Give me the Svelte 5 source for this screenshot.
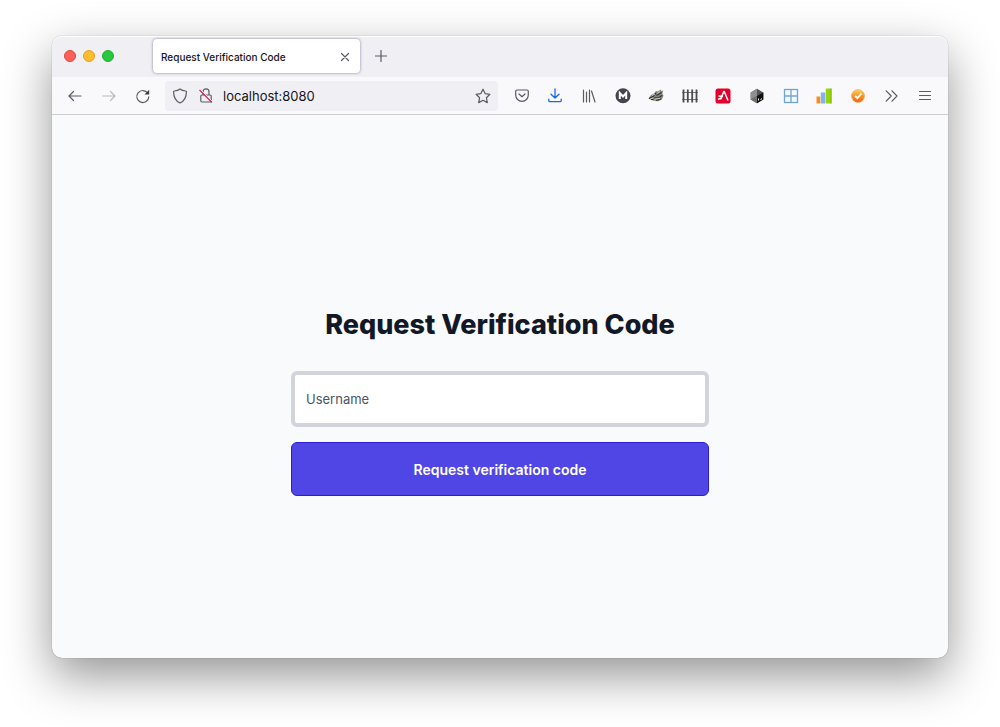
<script lang="ts">
  const title = 'Request Verification Code';

  let address = $state('localhost:8080');
  let username = $state('');

  function onSubmit(e: SubmitEvent) {
    e.preventDefault();
  }
</script>

<div class="desktop">
  <div class="window">
    <header class="tab-bar">
      <div class="lights">
        <button type="button" class="light red" aria-label="Close window"></button>
        <button type="button" class="light yellow" aria-label="Minimize window"></button>
        <button type="button" class="light green" aria-label="Zoom window"></button>
      </div>
      <div class="tab">
        <span class="tab-title">{title}</span>
        <button type="button" class="tab-close" aria-label="Close tab">
          <svg width="10" height="10" viewBox="0 0 10 10"><path class="line" d="M1.5 1.5l7 7M8.5 1.5l-7 7" /></svg>
        </button>
      </div>
      <button type="button" class="new-tab" aria-label="New tab">
        <svg width="12" height="12" viewBox="0 0 12 12"><path class="line" d="M6 .5v11M.5 6h11" /></svg>
      </button>
    </header>

    <nav class="toolbar" aria-label="Navigation">
      <div class="history">
        <button type="button" aria-label="Back">
          <svg width="16" height="16" viewBox="0 0 16 16"><path class="line" d="M14 8H2M6.500 3.500L2 8l4.500 4.500" /></svg>
        </button>
        <button type="button" aria-label="Forward" disabled>
          <svg width="16" height="16" viewBox="0 0 16 16"><path class="line" d="M2 8h12M9.500 3.500L14 8l-4.500 4.500" /></svg>
        </button>
        <button type="button" aria-label="Reload">
          <svg width="16" height="16" viewBox="0 0 16 16">
            <path class="line" d="M12.800 5.200A6 6 0 1 0 13.800 8.800" />
            <path fill="#3b3a45" d="M14.200 1.800v4.700H9.500z" />
          </svg>
        </button>
      </div>

      <div class="address">
        <button type="button" aria-label="Tracking protection">
          <svg width="16" height="16" viewBox="0 0 16 16"><path class="line" d="M8 1C6.500 2.300 4.300 2.900 2.300 3c-.4 0-.7.3-.7.700C1.600 9 3.500 13 8 15c4.500-2 6.400-6 6.400-11.300 0-.4-.3-.7-.7-.7C11.700 2.900 9.500 2.300 8 1z" /></svg>
        </button>
        <button type="button" aria-label="Connection is not secure">
          <svg width="16" height="16" viewBox="0 0 16 16">
            <path class="line" d="M5 7V3.800a3 3 0 0 1 6 0V7M4 7h8a1.200 1.200 0 0 1 1.200 1.200v4.600A1.200 1.200 0 0 1 12 14H4a1.200 1.200 0 0 1-1.200-1.200V8.200A1.200 1.200 0 0 1 4 7z" />
            <path stroke="#f9f9fb" stroke-width="1" d="M2.500 1.500l12.500 12.500" />
            <path stroke="#e22850" stroke-width="1.300" d="M1.500 2L14 14.500" />
          </svg>
        </button>
        <input type="text" aria-label="Address" bind:value={address} />
        <button type="button" aria-label="Bookmark this page">
          <svg width="16" height="16" viewBox="0 0 16 16"><path class="line" d="M8 1.200l2.100 4.400 4.800.7-3.500 3.400.9 4.900L8 12.300l-4.300 2.300.9-4.900L1.100 6.300l4.800-.7z" /></svg>
        </button>
      </div>

      <div class="extensions">
        <button type="button" aria-label="Pocket">
          <svg width="16" height="16" viewBox="0 0 16 16">
            <path class="line" d="M3 2h10a1.300 1.300 0 0 1 1.300 1.300V7a6.300 6.300 0 0 1-12.600 0V3.300A1.300 1.300 0 0 1 3 2z" />
            <path class="line" d="M5 6l3 2.700L11 6" />
          </svg>
        </button>
        <button type="button" aria-label="Downloads">
          <svg width="16" height="16" viewBox="0 0 16 16"><path fill="none" stroke="#1967e8" stroke-width="1.300" stroke-linecap="round" stroke-linejoin="round" d="M8 .8v9M4 6.200L8 10l4-3.800M1.800 11.200v1.300a1.200 1.200 0 0 0 1.200 1.200h10a1.200 1.200 0 0 0 1.200-1.200v-1.300" /></svg>
        </button>
        <button type="button" aria-label="Library">
          <svg width="16" height="16" viewBox="0 0 16 16"><path class="line" d="M2.500 2v12M5.500 4v10M8.500 2v12M10.500 3l3.500 11" /></svg>
        </button>
        <button type="button" aria-label="Multi-account">
          <svg width="16" height="16" viewBox="0 0 16 16">
            <circle cx="8" cy="7.700" r="7.500" fill="#45434f" />
            <path fill="none" stroke="#fff" stroke-width="2" d="M4.800 11V5L8 8.500 11.200 5v6" />
          </svg>
        </button>
        <button type="button" aria-label="Privacy Badger">
          <svg width="16" height="16" viewBox="0 0 16 16">
            <path fill="#85867f" d="M.5 10.500L3 7l3-1.500 2-2.500 2 .5 2.500-2 .8 1.500 2-.5-1 3 1.200 2-1.500 4-4 1.800-5.500-.8z" />
            <path fill="none" stroke="#2f302e" stroke-width="1.100" d="M1 10.500L5 8.500l3-3.500M8.500 7.500l5-3M6 10l5-.5 3-2M8 12.500l5-1.500M3 11.500h2.500" />
            <path fill="none" stroke="#d6d6d0" stroke-width=".9" d="M4 7.500L7 6M6.500 11.200l5.500-1M2.500 10.500L5 10M9.500 5.500l2.500-2" />
          </svg>
        </button>
        <button type="button" aria-label="Fence">
          <svg width="18" height="16" viewBox="0 0 18 16">
            <path fill="none" stroke="#77777b" stroke-width="1" d="M1 4.500h16M1 11.500h16" />
            <path fill="none" stroke="#4b4b50" stroke-width="1.800" d="M2.500 1.500v13M6.800 1.500v13M11.200 1.500v13M15.500 1.500v13" />
          </svg>
        </button>
        <button type="button" aria-label="Accessibility checker">
          <svg width="16" height="16" viewBox="0 0 16 16">
            <rect x=".5" y=".5" width="15" height="15" rx="2.500" fill="#e4002b" />
            <path fill="none" stroke="#fff" stroke-width="1.500" d="M9 3l4 9.500M9 3L5.500 11.500M3.500 8l4.500.5M3 11.500l4-2" />
          </svg>
        </button>
        <button type="button" aria-label="Terminal cube">
          <svg width="16" height="16" viewBox="0 0 16 16">
            <path fill="#555" d="M8 .8l6.300 3.600v7.200L8 15.200l-6.300-3.600V4.400z" />
            <path fill="#8f8f8f" d="M8 .8L1.700 4.400v7.200L8 8z" />
            <path fill="#707070" d="M1.700 11.600L8 15.200V8z" />
            <path fill="#111" d="M14.300 4.400v7.200L8 15.200V8z" />
            <path stroke="#fff" d="M9.500 10.500v2M11.500 11.500l1.500-.8" />
          </svg>
        </button>
        <button type="button" aria-label="Window layout">
          <svg width="16" height="16" viewBox="0 0 16 16">
            <rect x="1.500" y="1.500" width="13" height="13" fill="#f3faff" stroke="#73a4cd" stroke-width="1.300" />
            <path stroke="#73a4cd" stroke-width="1.300" d="M8 1.500v13M1.500 8h13" />
          </svg>
        </button>
        <button type="button" aria-label="Statistics">
          <svg width="16" height="16" viewBox="0 0 16 16">
            <path fill="#f98e16" d="M.5 8.500h3.800v7H.5z" />
            <path fill="#80b2f5" d="M4.800 4.500h4.500v11H4.800z" />
            <path fill="#98d40d" d="M9.800.5h5.700v15H9.800z" />
            <path fill="#7bb60a" d="M14.500.5h1v15h-1z" />
          </svg>
        </button>
        <button type="button" aria-label="Tasks">
          <svg width="16" height="16" viewBox="0 0 16 16">
            <defs>
              <linearGradient id="orange" x1="0" y1="0" x2="0" y2="1">
                <stop offset="0" stop-color="#fbd36e" />
                <stop offset=".45" stop-color="#fb9b20" />
                <stop offset="1" stop-color="#f65b0c" />
              </linearGradient>
            </defs>
            <circle cx="8" cy="8" r="6.500" fill="url(#orange)" stroke="#e9a968" stroke-width=".6" />
            <path fill="none" stroke="#fff" stroke-width="1.800" d="M5 8l2.300 2.200L11.500 5.500" />
          </svg>
        </button>
        <button type="button" aria-label="More tools">
          <svg width="16" height="16" viewBox="0 0 16 16"><path class="line" d="M2.200 2.800L7.200 8l-5 5.200M8 2.800L13 8l-5 5.200" /></svg>
        </button>
        <button type="button" aria-label="Menu">
          <svg width="16" height="16" viewBox="0 0 16 16"><path class="line" d="M2.500 3.500h11M2.500 7.500h11M2.500 11.500h11" /></svg>
        </button>
      </div>
    </nav>

    <main class="page">
      <form onsubmit={onSubmit}>
        <h1>{title}</h1>
        <input type="text" placeholder="Username" aria-label="Username" bind:value={username} />
        <button type="submit">Request verification code</button>
      </form>
    </main>
  </div>
</div>

<style>
  :global(body) {
    background: #fff;
    font-family: Inter, 'Liberation Sans', sans-serif;
  }

  .desktop {
    display: flex;
    box-sizing: border-box;
    min-height: 100vh;
    padding: 36px 52px 69px;
    overflow: hidden;
  }

  .window {
    display: flex;
    flex: 1;
    flex-direction: column;
    border-radius: 10px;
    background: #f9fafb;
    box-shadow:
      0 0 1px rgba(0, 0, 0, 0.5),
      0 18px 48px rgba(0, 0, 0, 0.42);
  }

  button {
    display: flex;
    align-items: center;
    justify-content: center;
    padding: 0;
    border: 0;
    background: none;
    font: inherit;
  }

  input {
    box-sizing: border-box;
    min-width: 0;
    font: inherit;
  }

  .line {
    fill: none;
    stroke: #5b5a64;
    stroke-width: 1.2;
    stroke-linecap: round;
    stroke-linejoin: round;
  }

  .tab-bar {
    display: flex;
    align-items: center;
    height: 41px;
    padding: 0 12px 1px;
    box-sizing: border-box;
    border-radius: 10px 10px 0 0;
    background: #f0eff4;
    box-shadow: inset 0 1px #fff;
  }

  .lights {
    display: flex;
    gap: 7px;
    margin-right: 39px;
  }

  .light {
    width: 12px;
    height: 12px;
    border-radius: 50%;
  }

  .red {
    border: 1px solid #e2463f;
    background: #ff5f57;
  }

  .yellow {
    border: 1px solid #e1a325;
    background: #febc2e;
  }

  .green {
    border: 1px solid #24ab35;
    background: #28c840;
  }

  .tab {
    display: flex;
    align-items: center;
    justify-content: space-between;
    box-sizing: border-box;
    width: 207px;
    height: 34px;
    padding: 1px 10px 0 8px;
    border-radius: 4px;
    background: #fff;
    box-shadow: 0 0 3px rgba(60, 55, 100, 0.6);
    color: #15141a;
    font-size: 10px;
    font-weight: 500;
  }

  .new-tab {
    width: 28px;
    height: 28px;
    margin-left: 7px;
  }

  .toolbar {
    display: flex;
    align-items: center;
    height: 38px;
    box-sizing: border-box;
    padding: 0 6px;
    border-bottom: 1px solid #ccccd1;
    background: #f9f9fb;
  }

  .history {
    display: flex;
    margin-right: 5px;
  }

  .history button {
    width: 34px;
    height: 30px;
  }

  .history button:disabled {
    opacity: 0.4;
  }

  .address {
    display: flex;
    flex: 1;
    align-items: center;
    min-width: 0;
    height: 30px;
    margin-right: 7px;
    padding: 0 2px;
    border-radius: 4px;
    background: #f0f0f4;
  }

  .address button {
    width: 26px;
    height: 26px;
  }

  .address input {
    flex: 1;
    padding: 0 4px;
    border: 0;
    background: none;
    color: #15141a;
    font-size: 13px;
  }

  .extensions {
    display: grid;
    grid-template-columns: repeat(13, 1fr);
    width: 437px;
  }

  .extensions button {
    height: 30px;
  }

  .page {
    display: flex;
    flex: 1;
    align-items: center;
    justify-content: center;
    padding: 24px;
  }

  form {
    display: flex;
    flex-direction: column;
    width: 100%;
    max-width: 418px;
    padding-top: 32px;
  }

  form h1 {
    margin: 0 0 30px;
    color: #111827;
    font-size: 27px;
    font-weight: 800;
    line-height: 32px;
    text-align: center;
  }

  form input {
    height: 56px;
    margin-bottom: 15px;
    padding: 0 11px;
    border: 4px solid #d1d5db;
    border-radius: 6px;
    background: #fff;
    color: #111827;
    font-size: 13px;
  }

  form input::placeholder {
    color: #4b5563;
    opacity: 1;
  }

  form button {
    height: 54px;
    border: 1px solid #2a1fd0;
    border-radius: 6px;
    background: #4f46e5;
    color: #fff;
    font-size: 14px;
    font-weight: 600;
  }
</style>
